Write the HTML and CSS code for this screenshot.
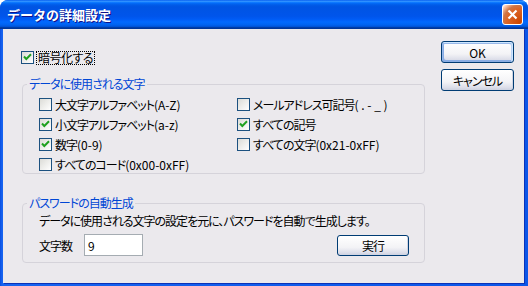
FILE: index.html
```html
<!DOCTYPE html>
<html lang="ja">
<head>
    <meta charset="UTF-8">
    <meta name="viewport" content="width=device-width, initial-scale=1.0">
    <title>データの詳細設定</title>
    <link rel="stylesheet" href="styles.css">
</head>
<body>
    <div class="window">
        <div class="title-bar">
            <span class="title-text">データの詳細設定</span>
            <button class="close-btn" aria-label="閉じる">
                <svg width="11" height="11" viewBox="0 0 11 11">
                    <path d="M1.5 1.5 L9.5 9.5 M9.5 1.5 L1.5 9.5" stroke="#fff" stroke-width="2.2" fill="none"/>
                </svg>
            </button>
        </div>

        <div class="client">
            <div class="main">
                <label class="check encrypt">
                    <span class="box"><svg viewBox="0 0 11 11"><path d="M2 4.5 L4.3 7 L9 2.3" stroke="#21a121" stroke-width="2" fill="none"/></svg></span>
                    <span class="focus">暗号化する</span>
                </label>

                <fieldset class="group">
                    <legend>データに使用される文字</legend>
                    <div class="check-grid">
                        <label class="check"><span class="box"></span>大文字アルファベット<span class="latin">(A-Z)</span></label>
                        <label class="check"><span class="box"></span>メールアドレス可記号<span class="latin">( . - _ )</span></label>
                        <label class="check"><span class="box"><svg viewBox="0 0 11 11"><path d="M2 4.5 L4.3 7 L9 2.3" stroke="#21a121" stroke-width="2" fill="none"/></svg></span>小文字アルファベット<span class="latin">(a-z)</span></label>
                        <label class="check"><span class="box"><svg viewBox="0 0 11 11"><path d="M2 4.5 L4.3 7 L9 2.3" stroke="#21a121" stroke-width="2" fill="none"/></svg></span>すべての記号</label>
                        <label class="check"><span class="box"><svg viewBox="0 0 11 11"><path d="M2 4.5 L4.3 7 L9 2.3" stroke="#21a121" stroke-width="2" fill="none"/></svg></span>数字<span class="latin">(0-9)</span></label>
                        <label class="check"><span class="box"></span>すべての文字<span class="latin">(0x21-0xFF)</span></label>
                        <label class="check"><span class="box"></span>すべてのコード<span class="latin">(0x00-0xFF)</span></label>
                    </div>
                </fieldset>

                <fieldset class="group gen">
                    <legend>パスワードの自動生成</legend>
                    <div class="gen-body">
                        <p class="desc">データに使用される文字の設定を元に、パスワードを自動で生成します。</p>
                        <div class="gen-row">
                            <span class="count-label">文字数</span>
                            <input class="count" type="text" value="9">
                            <button class="btn run">実行</button>
                        </div>
                    </div>
                </fieldset>
            </div>

            <div class="side">
                <button class="btn default">OK</button>
                <button class="btn">キャンセル</button>
            </div>
        </div>
    </div>
</body>
</html>
```

FILE: styles.css
```css
* {
    box-sizing: border-box;
}

html, body {
    margin: 0;
    padding: 0;
    background: #fff;
}

body {
    font-family: "Noto Sans CJK JP", "Noto Sans", sans-serif;
    font-size: 12px;
    color: #000;
    font-feature-settings: "palt";
    letter-spacing: -1px;
}

.latin {
    letter-spacing: 0;
}

.window {
    width: 528px;
    height: 286px;
    display: flex;
    flex-direction: column;
    background: linear-gradient(to right, #0a4ee0, #1663f0 2px, #0b56e8);
    border-radius: 8px 8px 0 0;
    overflow: hidden;
}

.title-bar {
    height: 29px;
    flex: none;
    display: flex;
    align-items: center;
    justify-content: space-between;
    padding: 0 5px 0 7px;
    background: linear-gradient(180deg, #0058ee 0%, #3593ff 4%, #288eff 6%, #127dff 8%, #036ffc 10%, #0262ee 14%, #0057e5 20%, #0054e3 24%, #0055eb 56%, #005bf5 66%, #026afe 76%, #0062ef 86%, #0052d6 92%, #0040ab 94%, #003092 100%);
}

.title-text {
    color: #fff;
    font-weight: bold;
    font-size: 13px;
    letter-spacing: 0;
    font-feature-settings: normal;
    text-shadow: 1px 1px #0f1089;
}

.close-btn {
    width: 21px;
    height: 21px;
    padding: 0;
    border: 1px solid #fff;
    border-radius: 3px;
    display: flex;
    align-items: center;
    justify-content: center;
    background: radial-gradient(circle at 90% 90%, #cc4600 0%, #dc6527 55%, #cd7546 70%, #ffccb2 90%, #fff 100%);
}

.client {
    flex: 1;
    margin: 0 4px 3px 3px;
    background: #ebe9ed;
    box-shadow: 1px 1px 0 #0b33b8;
    display: flex;
    gap: 16px;
    padding: 12px 0 0 19px;
}

.main {
    width: 403px;
    padding-top: 10px;
}

.check {
    display: flex;
    align-items: center;
    height: 13px;
    line-height: 13px;
    white-space: nowrap;
}

.box {
    width: 13px;
    height: 13px;
    flex: none;
    margin-right: 3px;
    border: 1px solid #1c5180;
    background: linear-gradient(135deg, #dcdcd7, #fff);
}

.box svg {
    display: block;
    width: 11px;
    height: 11px;
}

.encrypt {
    margin-left: -1px;
}

.focus {
    outline: 1px dotted #000;
    padding: 0 1px;
    line-height: 12px;
    letter-spacing: -0.5px;
}

.group {
    margin: 14px 0 0;
    padding: 0;
    min-width: 0;
    border: 1px solid #d5d3da;
    border-radius: 4px;
}

.group legend {
    margin-left: 4px;
    padding: 0 2px;
    line-height: 12px;
    color: #0046d5;
}

.check-grid {
    display: grid;
    grid-template-columns: 198px auto;
    grid-auto-rows: 13px;
    row-gap: 7px;
    padding: 8px 16px 2px;
}

.gen {
    margin-top: 23px;
}

.gen-body {
    padding: 6px 15px 6px 16px;
}

.desc {
    margin: 0;
    line-height: 12px;
}

.gen-row {
    display: flex;
    align-items: flex-end;
    margin-top: 7px;
}

.count-label {
    width: 45px;
    align-self: center;
}

.count {
    width: 59px;
    height: 22px;
    border: 1px solid #a5acb2;
    background: #fff;
    padding: 0 3px;
    font: inherit;
    letter-spacing: 0;
    outline: none;
}

.btn {
    height: 22px;
    width: 73px;
    padding: 0;
    font-family: inherit;
    font-size: 12px;
    font-feature-settings: "palt";
    letter-spacing: -1px;
    color: #000;
    border: 1px solid #003c74;
    border-radius: 3px;
    background: linear-gradient(180deg, #fff, #f3f3f6 60%, #dadce8 90%, #c9cede);
    box-shadow: inset -1px -1px 0 #d0d4e2;
}

.run {
    width: 72px;
    height: 21px;
    margin-left: auto;
}

.default {
    letter-spacing: 0;
    box-shadow: inset -1px 1px #cee7ff, inset 1px 2px #98b8ea, inset -2px 2px #bcd4f6, inset 1px -1px #89ade4, inset 2px -2px #89ade4;
}

.side {
    display: flex;
    flex-direction: column;
    gap: 6px;
}
```
